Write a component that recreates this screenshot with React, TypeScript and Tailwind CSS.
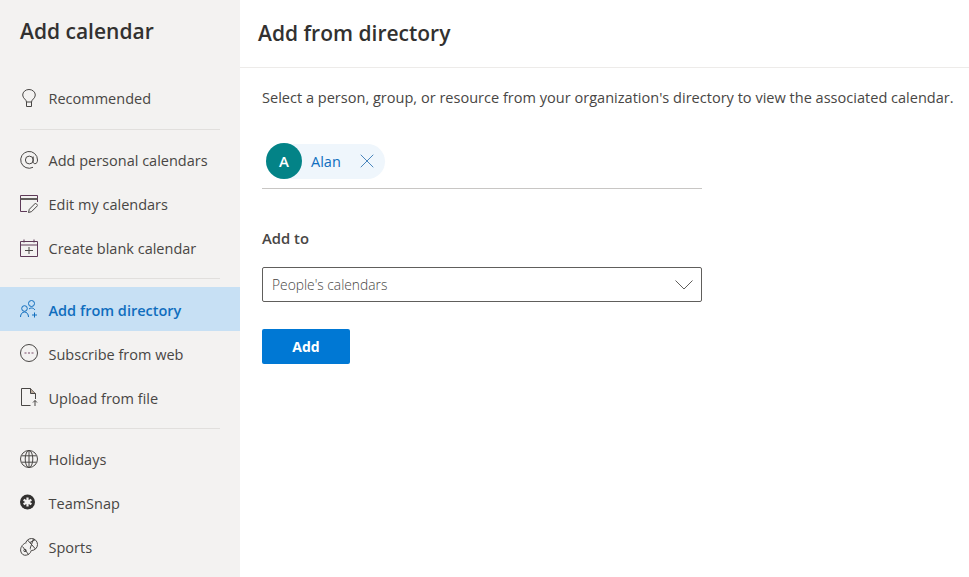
import { X } from "lucide-react";
import type { ReactNode } from "react";

const font = "font-['Open_Sans',sans-serif]";

function Svg({ children }: { children: ReactNode }) {
  return (
    <svg width="18" height="18" viewBox="0 0 18 18" fill="none" stroke="currentColor" strokeWidth="1" className="shrink-0">
      {children}
    </svg>
  );
}

const icons: Record<string, ReactNode> = {
  bulb: (
    <Svg>
      <path d="M6.500 13C6.500 10.500 2.700 9.500 2.700 6a6.300 5.500 0 0 1 12.600 0C15.300 9.500 11.500 10.500 11.500 13Z" />
      <path d="M6.500 13V17.500H11.500V13" />
    </Svg>
  ),
  at: (
    <Svg>
      <path d="M13 16.300A8.400 8.400 0 1 1 17.500 9c0 2.300-1 3.700-2.500 3.700-1.200 0-1.800-.9-1.800-1.900V5.500M13.200 9a3.900 3.900 0 1 1-7.800 0 3.900 3.900 0 0 1 7.800 0Z" />
    </Svg>
  ),
  edit: (
    <Svg>
      <path d="M7 16.500H.500V.500H17.500V7" stroke="#5e3a58" />
      <path d="M.500 4H17.500" stroke="#605e5c" strokeWidth="2" />
      <path d="M8.500 17.500l.800-3.200 6.200-6.200 2.300 2.300-6.200 6.200Z" />
    </Svg>
  ),
  blank: (
    <Svg>
      <path d="M.500 2.500H17.500V17.500H.500ZM.500 6H17.500M4 .500V3.500M14 .500V3.500" stroke="#5e3a58" />
      <path d="M5 11.500H13M9 8V15" />
    </Svg>
  ),
  people: (
    <Svg>
      <circle cx="11.500" cy="3.500" r="3" />
      <circle cx="4.500" cy="8.500" r="2.800" />
      <path d="M.500 17c0-3 1.800-5 4-5s4 2 4 5M9 9c.7-.7 1.500-1 2.500-1 1.500 0 2.600.7 3.400 2M14.500 12.500V17.500M12 15H17" />
    </Svg>
  ),
  web: (
    <Svg>
      <circle cx="9" cy="9" r="8.500" />
      <path d="M4.500 9H6.500M8 9H10M11.500 9H13.500" stroke="#7a4a6a" strokeWidth="1.200" />
    </Svg>
  ),
  upload: (
    <Svg>
      <path d="M10.500 17.500H1.500V.500H10.500L15.500 5.500V11" />
      <path d="M10.500 .500V5.500H15.500" fill="#b8a89a" />
      <path d="M15 18V12.500M13 14.500L15 12.500L17 14.500" />
    </Svg>
  ),
  globe: (
    <Svg>
      <circle cx="9" cy="9" r="8.500" />
      <ellipse cx="9" cy="9" rx="3.800" ry="8.500" />
      <path d="M9 .500V17.500M1.500 5.800H16.500M1.500 12.200H16.500" />
    </Svg>
  ),
  snap: (
    <svg width="18" height="18" viewBox="0 0 18 18" className="shrink-0">
      <circle cx="7.500" cy="8" r="7.500" fill="#323130" />
      <path d="M7.500 3.500V12.500M3.600 5.750L11.400 10.250M11.400 5.750L3.600 10.250" stroke="#f3f2f1" strokeWidth="2.200" />
    </svg>
  ),
  sports: (
    <Svg>
      <circle cx="11.500" cy="6.500" r="6" />
      <path d="M7.500 2L15.500 11M13.500 .800L9.500 12.300M10 4.500L15 1.800" />
      <path d="M5.500 5C2 6.500 .200 10 .700 13c.5 3 3 4.700 5.500 4.200 2.500-.5 4.300-2 5-4.500" fill="#f3f2f1" />
      <path d="M2.500 8.500L8.500 16.500" />
      <circle cx="5" cy="12.500" r="1.200" />
    </Svg>
  ),
};

function NavItem({ icon, label, active, low }: { icon: string; label: string; active?: boolean; low?: boolean }) {
  return (
    <div className={`flex h-11 items-center gap-[10.500px] pl-5 text-[14.500px] ${active ? "bg-[#c7e0f4] font-semibold text-[#106ebe]" : "text-[#484644]"}`}>
      {icons[icon]}
      <span className={low ? "pt-1" : "pt-[2px]"}>{label}</span>
    </div>
  );
}

function Divider({ className }: { className: string }) {
  return <div className={`mx-5 h-px bg-[#e1dfdd] ${className}`} />;
}

export default function App() {
  return (
    <div className={`flex h-[577px] w-[969px] overflow-hidden bg-white ${font}`}>
      <aside className="w-60 shrink-0 bg-[#f3f2f1]">
        <h1 className="h-[76px] pl-5 pt-[16px] text-[21px] font-semibold text-[#323130]">Add calendar</h1>
        <NavItem icon="bulb" label="Recommended" />
        <Divider className="mt-[9px] mb-2" />
        <NavItem icon="at" label="Add personal calendars" />
        <NavItem icon="edit" label="Edit my calendars" />
        <NavItem icon="blank" label="Create blank calendar" />
        <Divider className="my-2" />
        <NavItem icon="people" label="Add from directory" active low />
        <NavItem icon="web" label="Subscribe from web" low />
        <NavItem icon="upload" label="Upload from file" low />
        <Divider className="mt-[9px] mb-2" />
        <NavItem icon="globe" label="Holidays" />
        <NavItem icon="snap" label="TeamSnap" />
        <NavItem icon="sports" label="Sports" />
      </aside>
      <main className="flex-1">
        <header className="h-[68px] border-b border-[#edebe9] pl-[18px] pt-[18px] text-[21px] font-semibold text-[#323130]">
          Add from directory
        </header>
        <div className="pl-[22px]">
          <p className="pt-[19px] text-[14.560px] text-[#484644]">
            Select a person, group, or resource from your organization's directory to view the associated calendar.
          </p>
          <div className="mt-[35px] w-[440px] border-b border-[#c8c6c4] pb-[9px] pl-1">
            <div className="flex h-[35px] w-[119px] items-center rounded-full bg-[#eff6fc]">
              <span className="flex size-9 shrink-0 items-center justify-center rounded-full bg-[#038387] text-[15px] font-semibold text-white">A</span>
              <span className="ml-[9px] pt-[2px] text-[14.500px] text-[#106ebe]">Alan</span>
              <X size={24} strokeWidth={1} className="ml-[14px] text-[#4a86bd]" />
            </div>
          </div>
          <div className="mt-[38px] text-[14.800px] font-semibold text-[#484644]">Add to</div>
          <div className="mt-[18px] flex h-[35px] w-[440px] items-center justify-between rounded-[2px] border border-[#605e5c] pl-[9px] pr-2 text-[13.800px] font-light text-[#484644]">
            <span className="pt-[2px]">People's calendars</span>
            <svg width="18" height="10" viewBox="0 0 18 10" fill="none" stroke="#605e5c" strokeWidth="1">
              <path d="M.500 .500L9 9L17.500 .500" />
            </svg>
          </div>
          <button className="mt-[27px] h-[35px] w-[88px] rounded-[2px] bg-[#0078d4] text-[14px] font-bold text-white">Add</button>
        </div>
      </main>
    </div>
  );
}
